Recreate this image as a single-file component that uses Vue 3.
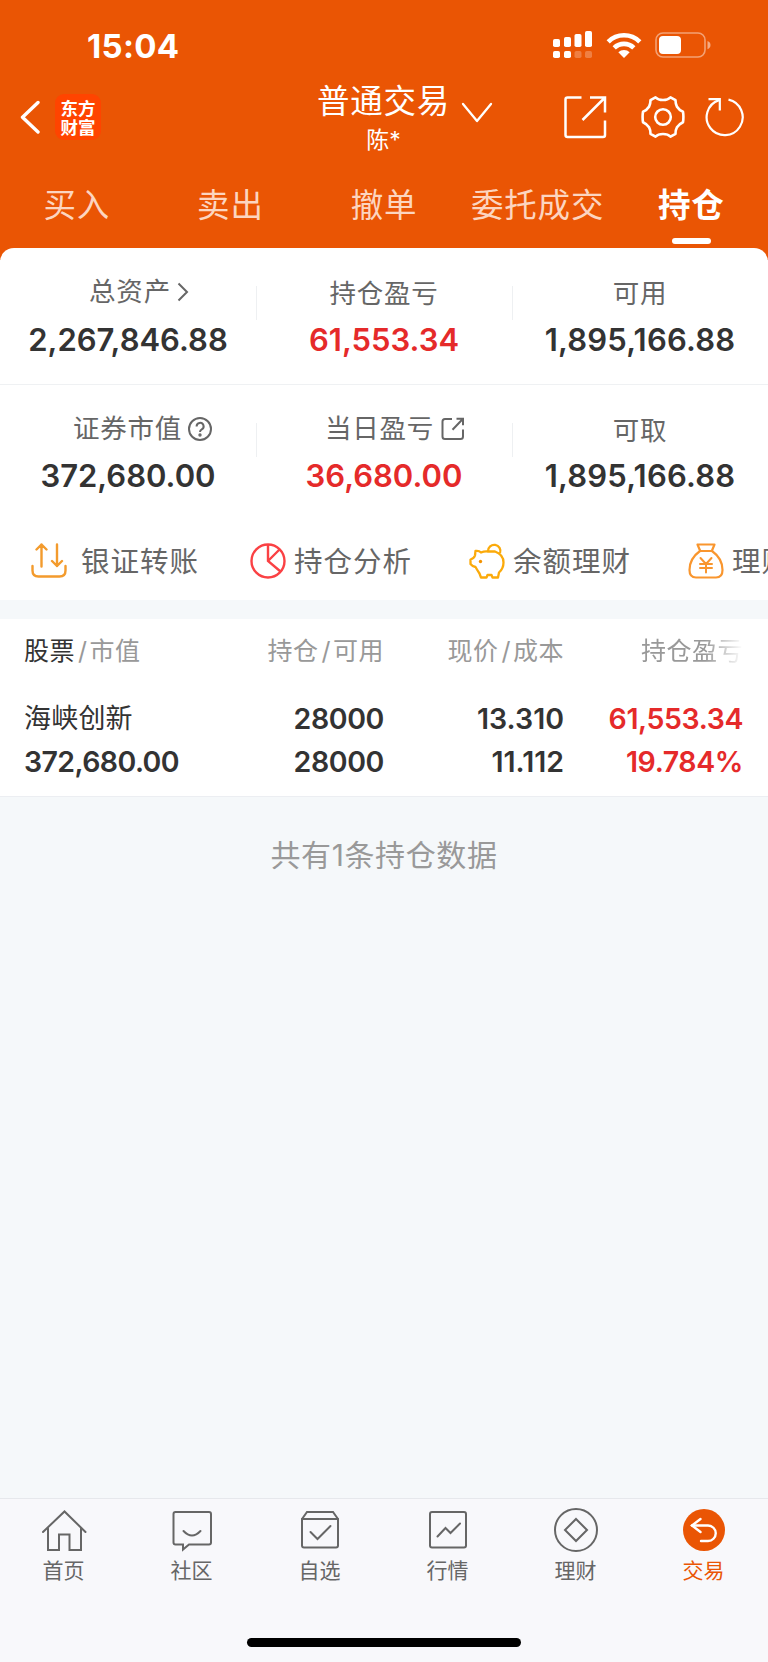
<template>
  <div class="page">
    <header class="header">
      <div class="status-bar">
        <span class="time">15:04</span>
        <div class="status-icons">
          <svg width="40" height="28" viewBox="0 0 40 28" fill="#fff">
            <rect x="0" y="8" width="7" height="8" rx="1.8" />
            <rect x="11" y="6" width="7" height="10" rx="1.8" />
            <rect x="21.500" y="3" width="7" height="13" rx="1.8" />
            <rect x="32" y="0" width="7" height="16" rx="1.8" />
            <rect x="0" y="20" width="7" height="7" rx="1.8" />
            <rect x="11" y="20" width="7" height="7" rx="1.8" />
            <rect x="21.500" y="20" width="7" height="7" rx="1.8" opacity="0.25" />
            <rect x="32" y="20" width="7" height="7" rx="1.8" opacity="0.25" />
          </svg>
          <svg class="wifi" width="36" height="26" viewBox="0 0 36 26" fill="none" stroke="#fff" stroke-width="4.600">
            <path d="M2.200 9.800a22.500 22.500 0 0 1 31.600 0" />
            <path d="M8.200 15.900a14 14 0 0 1 19.600 0" />
            <path d="M12.300 20.300a8.300 8.300 0 0 1 11.400 0L18 26z" fill="#fff" stroke="none" />
          </svg>
          <svg width="57" height="26" viewBox="0 0 57 26">
            <rect x="1" y="1" width="49" height="24" rx="7" fill="none" stroke="#fff" stroke-width="1.600" opacity="0.45" />
            <rect x="4" y="4" width="22" height="18" rx="4" fill="#fff" />
            <path d="M52.500 9c4 1.200 4 7 0 8.200z" fill="#fff" opacity="0.5" />
          </svg>
        </div>
      </div>

      <div class="nav-bar">
        <div class="nav-left">
          <svg width="20" height="34" viewBox="0 0 20 34" fill="none" stroke="#fff" stroke-width="3.400" stroke-linecap="round" stroke-linejoin="round">
            <path d="M18 2.500L2.500 17.300L18 32" />
          </svg>
          <div class="logo">
            <span>东方</span>
            <span>财富</span>
          </div>
        </div>
        <div class="nav-title">
          <span class="title">普通交易</span>
          <span class="account">陈*</span>
        </div>
        <svg class="nav-arrow" width="32" height="22" viewBox="0 0 32 22" fill="none" stroke="#fff" stroke-width="2.300" stroke-linecap="round" stroke-linejoin="round">
          <path d="M2 2L16 19L30 2" />
        </svg>
        <div class="nav-actions">
          <svg width="44" height="44" viewBox="0 0 44 44" fill="none" stroke="#fff" stroke-width="2.500">
            <path d="M18.500 2.500H4.500Q2.500 2.500 2.500 4.500V40Q2.500 42 4.500 42H40Q42 42 42 40V25.500M27 2.500H42V17.500M42 2.500L19.500 25" />
          </svg>
          <svg class="gear" width="44" height="44" viewBox="0 0 44 44" fill="none" stroke="#fff" stroke-width="2.600" stroke-linejoin="round">
            <path d="M14.500 2.300Q17 5 22 5Q27 5 29.500 2.300L34.500 5.200Q34.500 9 36 11.800Q38 15 42 16.800Q42.800 22 42 27.200Q38 29 36 32.200Q34.500 35 34.500 38.800L29.500 41.700Q27 39 22 39Q17 39 14.500 41.700L9.500 38.800Q9.500 35 8 32.200Q6 29 2 27.200Q1.200 22 2 16.800Q6 15 8 11.800Q9.500 9 9.500 5.200z" />
            <circle cx="22" cy="22" r="7.800" />
          </svg>
          <svg class="refresh" width="40" height="40" viewBox="0 0 40 40" fill="none" stroke="#fff" stroke-width="2.200">
            <path d="M23.500 2.600A18 18 0 1 1 14 3.100" />
            <path d="M3.500 2.200H14.800V13.500" />
          </svg>
        </div>
      </div>

      <nav class="trade-tabs">
        <div
          v-for="tab in tradeTabs"
          :key="tab"
          class="trade-tab"
          :class="{ active: tab === activeTab }"
          @click="activeTab = tab"
        >
          {{ tab }}
        </div>
      </nav>
    </header>

    <section class="assets">
      <div v-for="(row, index) in assetRows" :key="index" class="asset-row">
        <div v-for="item in row" :key="item.label" class="asset">
          <div class="asset-label" :class="item.icon">
            <span>{{ item.label }}</span>
            <svg v-if="item.icon === 'arrow'" width="12" height="20" viewBox="0 0 12 20">
              <path d="M1.500 1.500L10 10L1.500 18.500" />
            </svg>
            <svg v-else-if="item.icon === 'help'" width="24" height="24" viewBox="0 0 24 24">
              <circle cx="12" cy="12" r="11" />
              <path d="M8.600 9.400a3.500 3.500 0 1 1 5.200 3q-1.800 1-1.800 2.600" />
              <circle cx="12" cy="18" r="0.700" />
            </svg>
            <svg v-else-if="item.icon === 'share'" width="24" height="24" viewBox="0 0 24 24">
              <path d="M11 2H4Q1.500 2 1.500 4.500V19.500Q1.500 22 4 22H19.500Q22 22 22 19.500V12.500M15.500 1.800H22V8.300M22 1.800L11.500 12.800" />
            </svg>
          </div>
          <div class="asset-value" :class="{ up: item.up }">{{ item.value }}</div>
        </div>
      </div>

      <div class="shortcuts">
        <div class="shortcut transfer">
          <svg width="36" height="36" viewBox="0 0 36 36" fill="none" stroke="#f39b2d" stroke-width="2.400" stroke-linecap="round" stroke-linejoin="round">
            <path d="M1.500 23V27.500Q1.500 33.500 7.500 33.500H28.500Q34.500 33.500 34.500 27.500V23" />
            <path d="M10.500 23.500V1.500M5.500 6.500L10.500 1.500L15.500 6.500M26 1.500V23M21 18L26 23L31 18" />
          </svg>
          <span>银证转账</span>
        </div>
        <div class="shortcut">
          <svg width="36" height="36" viewBox="0 0 36 36" fill="none" stroke="#fa4144" stroke-width="2.400">
            <circle cx="18" cy="18" r="16.500" />
            <path d="M18 1.500V18L30.500 28.500M18 18L29.500 6.500" />
          </svg>
          <span>持仓分析</span>
        </div>
        <div class="shortcut">
          <svg width="36" height="36" viewBox="0 0 36 36" fill="none" stroke="#fbaa0a" stroke-width="2.300" stroke-linejoin="round">
            <path d="M6.500 8Q10 7.500 12 9.500Q15.500 8 19 8.500H26Q34.500 11.500 34.500 19.500Q34.500 25.500 30 29.500L29 34.500H23.500L22.500 32H18.500L17.500 34.500H12L10.500 30.500Q8.500 27.500 6.500 24Q3.500 23.500 1.500 21V16.500Q5 15.500 6 12.500z" />
            <path d="M19 8.200A6.200 6.200 0 1 1 31 10.200" />
            <circle cx="11.500" cy="18.500" r="1.700" fill="#f39200" stroke="none" />
          </svg>
          <span>余额理财</span>
        </div>
        <div class="shortcut">
          <svg width="36" height="36" viewBox="0 0 36 36" fill="none" stroke="#f9962e" stroke-width="2.200" stroke-linejoin="round" stroke-linecap="round">
            <path d="M12 8Q1.500 15.500 1.500 27Q1.500 34.500 8 34.500H28Q34.500 34.500 34.500 27Q34.500 15.500 24 8z" />
            <path d="M12 7.500L9.500 1.500H26.500L24 7.500" />
            <path d="M12.500 15L18 21L23.500 15M18 21V29.500M12 21H24M12 25H24" stroke-width="2" />
          </svg>
          <span>理财</span>
        </div>
      </div>
    </section>

    <section class="positions">
      <div class="position-head">
        <div><b>股票</b><i>/</i>市值</div>
        <div>持仓<i>/</i>可用</div>
        <div>现价<i>/</i>成本</div>
        <div class="faded">持仓盈亏</div>
      </div>
      <div v-for="stock in positions" :key="stock.name" class="position-row">
        <div>
          <span class="stock-name">{{ stock.name }}</span>
          <span class="market-value">{{ stock.marketValue }}</span>
        </div>
        <div>
          <span>{{ stock.amount }}</span>
          <span>{{ stock.available }}</span>
        </div>
        <div class="price">
          <span>{{ stock.price }}</span>
          <span>{{ stock.cost }}</span>
        </div>
        <div class="up">
          <span>{{ stock.profit }}</span>
          <span>{{ stock.profitRate }}</span>
        </div>
      </div>
    </section>

    <div class="summary">共有{{ positions.length }}条持仓数据</div>

    <footer class="tab-bar">
      <div class="tab-items">
        <div v-for="item in tabItems" :key="item.label" class="tab-item" :class="{ active: item.active }">
          <svg width="46" height="46" viewBox="0 0 46 46">
            <circle v-if="item.active" class="disc" cx="23" cy="23" r="21" />
            <path v-for="d in item.paths" :key="d" :d="d" />
          </svg>
          <span>{{ item.label }}</span>
        </div>
      </div>
      <div class="home-indicator"></div>
    </footer>
  </div>
</template>

<script setup>
import { ref } from 'vue';

const tradeTabs = ['买入', '卖出', '撤单', '委托成交', '持仓'];
const activeTab = ref('持仓');

const assetRows = [
  [
    { label: '总资产', value: '2,267,846.88', icon: 'arrow' },
    { label: '持仓盈亏', value: '61,553.34', up: true },
    { label: '可用', value: '1,895,166.88' }
  ],
  [
    { label: '证券市值', value: '372,680.00', icon: 'help' },
    { label: '当日盈亏', value: '36,680.00', icon: 'share', up: true },
    { label: '可取', value: '1,895,166.88' }
  ]
];

const positions = [
  {
    name: '海峡创新',
    marketValue: '372,680.00',
    amount: '28000',
    available: '28000',
    price: '13.310',
    cost: '11.112',
    profit: '61,553.34',
    profitRate: '19.784%'
  }
];

const tabItems = [
  {
    label: '首页',
    paths: ['M2 25L23.500 4.500L44.500 25', 'M7 21.500V43H18V27.500H28.500V43H40V21.500']
  },
  {
    label: '社区',
    paths: [
      'M6.500 5H40Q42 5 42 7V35.500Q42 37.500 40 37.500H20L14 42.500V37.500H6.500Q4.500 37.500 4.500 35.500V7Q4.500 5 6.500 5z',
      'M14.500 24Q23 33 31.500 24'
    ]
  },
  {
    label: '自选',
    paths: [
      'M5 12L10 5H36L41 12V38.500Q41 40.500 39 40.500H7Q5 40.500 5 38.500z',
      'M5 12H41',
      'M13.500 25L20.500 32L33.500 19'
    ]
  },
  {
    label: '行情',
    paths: [
      'M7 5H39Q41 5 41 7V38.500Q41 40.500 39 40.500H7Q5 40.500 5 38.500V7Q5 5 7 5z',
      'M12.500 29.500L20.500 21L25.500 26L35 16.500'
    ]
  },
  {
    label: '理财',
    paths: ['M23 2A21 21 0 1 1 23 44A21 21 0 1 1 23 2z', 'M23 12L34 23L23 34L12 23z']
  },
  {
    label: '交易',
    active: true,
    paths: ['M19.500 12L11 18.500L19.500 25', 'M11 18.500H27A7.700 7.700 0 0 1 27 34H20']
  }
];
</script>

<style>
body {
  background: #f5f8fa;
}
</style>

<style scoped>
.page {
  display: flex;
  flex-direction: column;
  width: 768px;
  height: 1662px;
  overflow: hidden;
  background: #f5f8fa;
  color: #333;
  font-family: Inter, "Noto Sans CJK SC", sans-serif;
  white-space: nowrap;
}

svg {
  display: block;
  flex-shrink: 0;
}

.header {
  height: 260px;
  flex-shrink: 0;
  background: #ea5504;
  color: #fff;
}

.status-bar {
  display: flex;
  justify-content: space-between;
  align-items: center;
  height: 90px;
  padding: 0 56px 0 87px;
  box-sizing: border-box;
}

.time {
  font-size: 33px;
  font-weight: 700;
  letter-spacing: 0.300px;
  line-height: 40px;
  margin-top: 2px;
}

.status-icons {
  display: flex;
  align-items: center;
}

.wifi {
  margin: 0 13px 0 13px;
}

.nav-bar {
  display: flex;
  align-items: flex-start;
  height: 80px;
}

.nav-left {
  display: flex;
  align-items: center;
  gap: 15px;
  width: 317px;
  height: 54px;
  padding-left: 20px;
  box-sizing: border-box;
}

.logo {
  display: flex;
  flex-direction: column;
  align-items: center;
  justify-content: center;
  width: 46px;
  height: 46px;
  border-radius: 9px;
  background: #ff4400;
  font-family: "Noto Sans CJK SC", sans-serif;
  font-size: 17.500px;
  font-weight: 700;
  line-height: 19px;
}

.nav-title {
  display: flex;
  flex-direction: column;
  align-items: center;
  width: 133px;
}

.title {
  font-size: 32.500px;
  line-height: 40px;
  letter-spacing: 0.700px;
  margin-top: -8px;
}

.account {
  font-size: 23px;
  line-height: 32px;
  margin-top: 2px;
}

.nav-arrow {
  margin: 12px 0 0 11px;
}

.nav-actions {
  display: flex;
  align-items: center;
  height: 54px;
  margin-left: auto;
  padding-right: 23px;
}

.gear {
  margin-left: 34px;
}

.refresh {
  margin-left: 20px;
}

.trade-tabs {
  display: grid;
  grid-template-columns: repeat(5, 1fr);
}

.trade-tab {
  display: flex;
  flex-direction: column;
  align-items: center;
  color: #fcd5c0;
  font-size: 32.500px;
  letter-spacing: 0.800px;
  line-height: 72px;
}

.trade-tab.active {
  color: #fff;
  font-weight: 700;
}

.trade-tab.active::after {
  content: '';
  width: 39px;
  height: 6px;
  margin-top: -4px;
  border-radius: 3px;
  background: #fff;
}

.assets {
  position: relative;
  margin-top: -12px;
  height: 352px;
  flex-shrink: 0;
  border-radius: 14px 14px 0 0;
  background: #fff;
}

.asset-row {
  display: grid;
  grid-template-columns: repeat(3, 1fr);
  height: 136px;
}

.asset-row:first-child {
  border-bottom: 1px solid #eff1f3;
}

.asset {
  display: flex;
  flex-direction: column;
  align-items: center;
  padding-top: 22px;
}

.asset + .asset {
  background: linear-gradient(#eef0f2, #eef0f2) left 38px / 1px 34px no-repeat;
}

.asset-label {
  display: flex;
  align-items: center;
  height: 38px;
  font-size: 26.500px;
  letter-spacing: 0.800px;
  color: #666;
}

.asset-label svg {
  margin-top: 5px;
  fill: none;
  stroke: #666;
  stroke-width: 2;
}

.asset-label:not(.arrow, .help, .share) {
  margin-top: 2px;
  margin-bottom: -2px;
}

.asset-label.arrow {
  gap: 6px;
  margin-left: 22px;
}

.asset-label.help {
  gap: 6px;
  margin-left: 29px;
}

.asset-label.share {
  gap: 7px;
  margin-left: 22px;
}

.asset-value {
  font-size: 31px;
  font-weight: 600;
  line-height: 40px;
  margin-top: 12px;
}

.asset:last-child .asset-value {
  letter-spacing: 0.200px;
}

.asset-row:nth-child(2) .asset-value {
  margin-top: 11px;
}

.up {
  color: #e52a2a;
}

.shortcuts {
  display: grid;
  grid-template-columns: repeat(4, 219px);
  height: 80px;
  padding-left: 31px;
  overflow: hidden;
}

.shortcut {
  display: flex;
  align-items: center;
  gap: 8px;
  height: 79px;
  font-size: 28.500px;
  letter-spacing: 1px;
  color: #666;
}

.shortcut span {
  margin-top: -2px;
}

.shortcut.transfer {
  gap: 14px;
}

.positions {
  height: 177px;
  flex-shrink: 0;
  margin-top: 19px;
  background: #fff;
  border-bottom: 1px solid #eceef2;
}

.position-head,
.position-row {
  display: grid;
  grid-template-columns: 180px 180px 180px 179px;
  padding-left: 24px;
}

.position-head {
  height: 64px;
  color: #999;
  font-size: 25px;
  letter-spacing: 0.500px;
  line-height: 64px;
  text-align: right;
}

.position-head div:first-child {
  text-align: left;
}

.position-head b {
  color: #333;
  font-weight: 400;
}

.position-head i {
  font-style: normal;
  margin: 0 2px 0 3px;
}

.faded {
  -webkit-mask-image: linear-gradient(to left, transparent 0, #000 38px);
  mask-image: linear-gradient(to left, transparent 0, #000 38px);
}

.position-row {
  padding-top: 14px;
  font-size: 28.500px;
  font-weight: 600;
  letter-spacing: -0.400px;
  line-height: 43px;
  text-align: right;
}

.position-row > div {
  display: flex;
  flex-direction: column;
}

.position-row > div:first-child {
  text-align: left;
}

.position-row .stock-name {
  height: 43px;
  font-size: 27px;
  font-weight: 400;
  letter-spacing: 0.200px;
}

.position-row .market-value {
  letter-spacing: -0.600px;
}

.position-row .price {
  letter-spacing: 0;
}

.summary {
  margin-top: 36px;
  color: #999;
  font-size: 30px;
  letter-spacing: 0.600px;
  line-height: 44px;
  text-align: center;
}

.tab-bar {
  display: flex;
  flex-direction: column;
  align-items: center;
  height: 164px;
  margin-top: auto;
  flex-shrink: 0;
  box-sizing: border-box;
  border-top: 1px solid #e6e8ec;
  background: #f8f8fb;
}

.tab-items {
  display: grid;
  grid-template-columns: repeat(6, 1fr);
  width: 100%;
  height: 139px;
}

.tab-item {
  display: flex;
  flex-direction: column;
  align-items: center;
  padding-top: 8px;
  color: #666;
  font-size: 21px;
  line-height: 34px;
}

.tab-item svg {
  fill: none;
  stroke: #666;
  stroke-width: 2;
  stroke-linecap: round;
}

.tab-item span {
  margin: 1px 1px 0 0;
}

.tab-item.active {
  color: #ea5504;
}

.tab-item.active svg {
  stroke: #fff;
  stroke-width: 2.400;
}

.tab-item .disc {
  fill: #ea5504;
  stroke: none;
}

.home-indicator {
  width: 274px;
  height: 9px;
  border-radius: 5px;
  background: #000;
}
</style>
